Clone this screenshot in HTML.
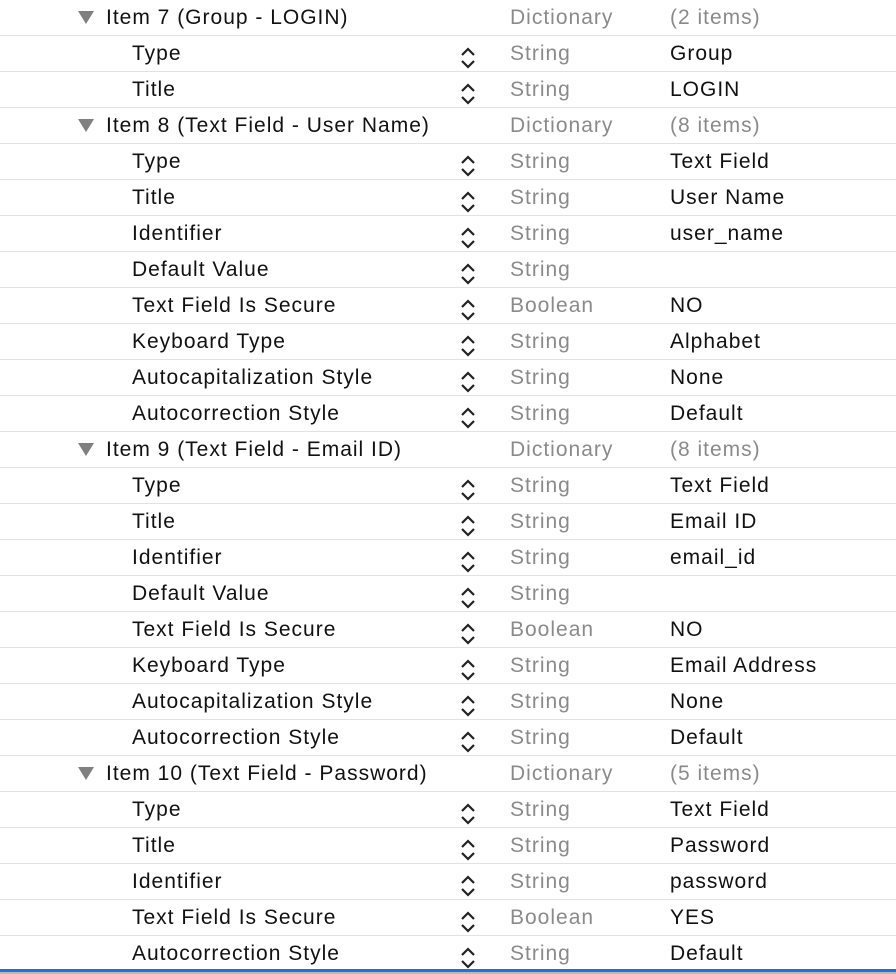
<!DOCTYPE html>
<html><head><style>
body{margin:0;width:896px;height:974px;background:#fff;overflow:hidden;font-family:"Liberation Sans",sans-serif;font-size:21px;letter-spacing:1px;color:#111;position:relative}
.r{position:absolute;left:0;width:896px;height:36px;border-bottom:1px solid #e2e2e2;box-sizing:border-box}
.r span{position:absolute;top:6px;white-space:nowrap}
.k{left:132px}.g .k{left:106px}
.t{left:510px;color:#8a8a8a}
.v{left:670px}
.g .v{color:#8a8a8a}
.tri{position:absolute;left:78px;top:11px;width:0;height:0;border-left:8px solid transparent;border-right:8px solid transparent;border-top:13px solid #808080}
.st{position:absolute;left:459px;top:10px}
</style></head><body>
<div id="c"></div>
<div style="position:absolute;left:0;top:969px;width:896px;height:3px;background:#2a6fcf"></div>
<div style="position:absolute;left:0;top:972px;width:896px;height:2px;background:#b8b8b8"></div>
<script>
var rows=[
["g","Item 7 (Group - LOGIN)","Dictionary","(2 items)"],
["","Type","String","Group"],["","Title","String","LOGIN"],
["g","Item 8 (Text Field - User Name)","Dictionary","(8 items)"],
["","Type","String","Text Field"],["","Title","String","User Name"],["","Identifier","String","user_name"],["","Default Value","String",""],["","Text Field Is Secure","Boolean","NO"],["","Keyboard Type","String","Alphabet"],["","Autocapitalization Style","String","None"],["","Autocorrection Style","String","Default"],
["g","Item 9 (Text Field - Email ID)","Dictionary","(8 items)"],
["","Type","String","Text Field"],["","Title","String","Email ID"],["","Identifier","String","email_id"],["","Default Value","String",""],["","Text Field Is Secure","Boolean","NO"],["","Keyboard Type","String","Email Address"],["","Autocapitalization Style","String","None"],["","Autocorrection Style","String","Default"],
["g","Item 10 (Text Field - Password)","Dictionary","(5 items)"],
["","Type","String","Text Field"],["","Title","String","Password"],["","Identifier","String","password"],["","Text Field Is Secure","Boolean","YES"],["","Autocorrection Style","String","Default"]];
var h="";
rows.forEach(function(r,i){
h+='<div class="r '+r[0]+'" style="top:'+(i*36)+'px">';
if(r[0])h+='<div class="tri"></div>';
else h+='<svg class="st" width="18" height="24" viewBox="0 0 18 24"><path d="M3 9L9 3L15 9M3 15L9 21L15 15" fill="none" stroke="#222" stroke-width="2.2"/></svg>';
h+='<span class="k">'+r[1]+'</span><span class="t">'+r[2]+'</span><span class="v">'+r[3]+'</span></div>';
});
document.getElementById("c").innerHTML=h;
</script>
</body></html>
